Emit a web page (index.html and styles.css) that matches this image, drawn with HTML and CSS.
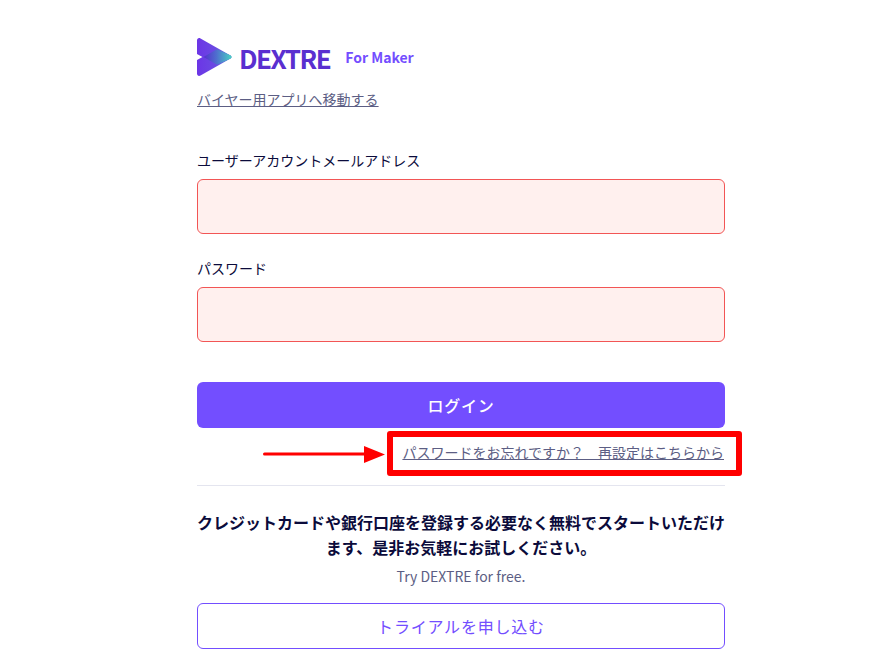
FILE: index.html
```html
<!DOCTYPE html>
<html lang="ja">
<head>
  <meta charset="UTF-8" />
  <meta name="viewport" content="width=device-width, initial-scale=1.0"/>
  <title>Login | DEXTRE</title>
  <link rel="stylesheet" href="styles.css">
</head>
<body>
  <main class="login">
    <div class="brand">
      <svg class="brand-icon" width="35" height="38" viewBox="0 0 35 38">
        <defs>
          <linearGradient id="wing" x1="0" y1="0" x2="1" y2="0">
            <stop offset="0" stop-color="#6c35e6"/>
            <stop offset="0.6" stop-color="#6a4ce2"/>
            <stop offset="1" stop-color="#5a8fd6"/>
          </linearGradient>
          <linearGradient id="overlap" x1="0" y1="0" x2="1" y2="0">
            <stop offset="0" stop-color="#5430cc"/>
            <stop offset="0.45" stop-color="#4f6ccf"/>
            <stop offset="1" stop-color="#48d2c2"/>
          </linearGradient>
        </defs>
        <path d="M0 2.500C0 .5 1.800-.5 3.500.5L33.500 17.500C34.800 18.300 34.800 19.700 33.500 20.500L20 27L0 16Z" fill="url(#wing)"/>
        <path d="M0 35.500C0 37.500 1.800 38.500 3.500 37.500L33.500 20.500C34.800 19.700 34.800 18.300 33.500 17.500L20 11L0 22Z" fill="url(#wing)"/>
        <path d="M6.500 19L20 11.200L33.500 17.500C34.800 18.300 34.800 19.700 33.500 20.500L20 26.800Z" fill="url(#overlap)"/>
      </svg>
      <span class="brand-name">DEXTRE</span>
      <span class="brand-tag">For Maker</span>
    </div>
    <a class="buyer-link" href="#">バイヤー用アプリへ移動する</a>

    <form class="login-form">
      <label class="field-label" for="email">ユーザーアカウントメールアドレス</label>
      <input class="field-input" id="email" type="text">
      <label class="field-label" for="password">パスワード</label>
      <input class="field-input" id="password" type="password">
      <button class="btn-login" type="button">ログイン</button>
    </form>

    <p class="forgot"><a href="#">パスワードをお忘れですか？　再設定はこちらから</a></p>

    <section class="trial">
      <h2>クレジットカードや銀行口座を登録する必要なく無料でスタートいただけます、是非お気軽にお試しください。</h2>
      <p>Try DEXTRE for free.</p>
      <a class="btn-trial" href="#">トライアルを申し込む</a>
    </section>
  </main>

  <!-- annotation drawn over the page -->
  <div class="note-box"></div>
  <svg class="note-arrow" width="125" height="20" viewBox="0 0 125 20">
    <path d="M2.500 10H104" stroke="#f00" stroke-width="3" stroke-linecap="round"/>
    <path d="M102 2L123 10.500L102 19Z" fill="#f00"/>
  </svg>
</body>
</html>
```

FILE: styles.css
```css
html, body {
  height: 100%;
}

body {
  margin: 0;
  background-color: #fff;
  color: #0b0b3b;
  font-family: "Noto Sans CJK JP", "Noto Sans", sans-serif;
  font-size: 14px;
  overflow: hidden;
  position: relative;
}

a {
  color: #5c5e84;
}

.login {
  width: 528px;
  margin-left: 197px;
  padding-top: 38px;
}

.brand {
  display: flex;
  align-items: center;
  height: 38px;
}

.brand-name {
  margin-left: 7px;
  color: #5a2fd0;
  font-size: 26px;
  font-weight: 700;
  letter-spacing: -1.5px;
}

.brand-tag {
  margin-left: 15px;
  color: #734eff;
  font-size: 14px;
  font-weight: 700;
}

.buyer-link {
  display: block;
  width: max-content;
  margin-top: 13px;
  line-height: 21px;
}

.login-form {
  margin-top: 40px;
}

.field-label {
  display: block;
  margin-bottom: 8px;
  line-height: 21px;
}

.field-input {
  display: block;
  box-sizing: border-box;
  width: 100%;
  height: 55px;
  margin-bottom: 24px;
  background-color: #fff0ee;
  border: 1px solid #f25555;
  border-radius: 6px;
}

.btn-login {
  display: block;
  width: 100%;
  height: 46px;
  margin-top: 40px;
  background-color: #734eff;
  color: #fff;
  border: none;
  border-radius: 6px;
  font-family: inherit;
  font-size: 16px;
  font-weight: 500;
  letter-spacing: 0.05em;
}

.forgot {
  margin: 14px 0 0;
  padding: 0 1px 22px 0;
  border-bottom: 1px solid #e4e5ef;
  text-align: right;
  line-height: 21px;
}

.trial {
  text-align: center;
}

.trial h2 {
  margin: 24px 0 0;
  font-size: 16px;
  font-weight: 700;
  line-height: 25px;
}

.trial p {
  margin: 6px 0 0;
  color: #5c5e84;
  line-height: 21px;
}

.btn-trial {
  display: block;
  box-sizing: border-box;
  height: 46px;
  margin-top: 16px;
  color: #734eff;
  border: 1px solid #734eff;
  border-radius: 6px;
  font-size: 16px;
  line-height: 44px;
  letter-spacing: 0.05em;
  text-decoration: none;
}

.note-box {
  position: absolute;
  left: 387px;
  top: 431px;
  box-sizing: border-box;
  width: 355px;
  height: 45px;
  border: 6px solid #f00;
  border-radius: 3px;
}

.note-arrow {
  position: absolute;
  left: 262px;
  top: 444px;
}
```
